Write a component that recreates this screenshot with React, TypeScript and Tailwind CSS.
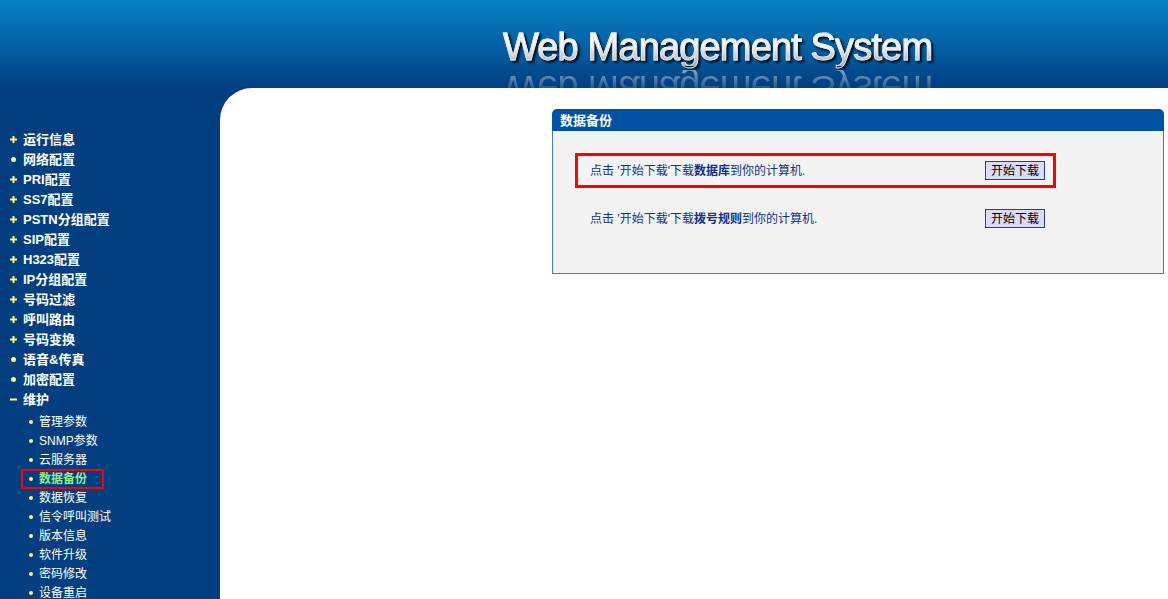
import React from "react";

type MenuItem = { label: string; icon: "plus" | "dot" | "minus" };

const mainMenu: MenuItem[] = [
  { label: "运行信息", icon: "plus" },
  { label: "网络配置", icon: "dot" },
  { label: "PRI配置", icon: "plus" },
  { label: "SS7配置", icon: "plus" },
  { label: "PSTN分组配置", icon: "plus" },
  { label: "SIP配置", icon: "plus" },
  { label: "H323配置", icon: "plus" },
  { label: "IP分组配置", icon: "plus" },
  { label: "号码过滤", icon: "plus" },
  { label: "呼叫路由", icon: "plus" },
  { label: "号码变换", icon: "plus" },
  { label: "语音&传真", icon: "dot" },
  { label: "加密配置", icon: "dot" },
  { label: "维护", icon: "minus" },
];

const subMenu = [
  "管理参数",
  "SNMP参数",
  "云服务器",
  "数据备份",
  "数据恢复",
  "信令呼叫测试",
  "版本信息",
  "软件升级",
  "密码修改",
  "设备重启",
];

const font = "font-['Liberation_Sans','Noto_Sans_CJK_SC',sans-serif]";

function MenuIcon({ kind }: { kind: MenuItem["icon"] }) {
  if (kind === "plus") {
    return (
      <svg width="7" height="7" viewBox="0 0 7 7" className="shrink-0">
        <rect x="0" y="2.5" width="7" height="2" fill="#fff67a" />
        <rect x="2.5" y="0" width="2" height="7" fill="#fff67a" />
      </svg>
    );
  }
  if (kind === "minus") {
    return (
      <svg width="7" height="7" viewBox="0 0 7 7" className="shrink-0">
        <rect x="0" y="2.5" width="7" height="2" fill="#fff67a" />
      </svg>
    );
  }
  return (
    <span className="w-[7px] h-[7px] flex items-center justify-center shrink-0">
      <span className="w-[5px] h-[5px] rounded-full bg-[#fff67a]" />
    </span>
  );
}

function Sidebar() {
  return (
    <aside className="w-[220px] shrink-0 pt-[41px]">
      {mainMenu.map((item) => (
        <div key={item.label} className="h-[20px] flex items-center pl-[10px] gap-[6px]">
          <MenuIcon kind={item.icon} />
          <span className="text-[13px] font-bold text-white leading-none">{item.label}</span>
        </div>
      ))}
      <div className="pt-[3px]">
        {subMenu.map((label) => {
          const active = label === "数据备份";
          return (
            <div key={label} className="h-[19px] flex items-center pl-[21px]">
              <div
                className={
                  active
                    ? "h-[20px] flex items-center gap-[6px] pl-[6px] pr-[15px] border-2 border-[#ff0000]"
                    : "h-[20px] flex items-center gap-[6px] pl-[6px] border-2 border-transparent"
                }
              >
                <span className="w-[4px] h-[4px] rounded-full bg-[#fff67a]" />
                <span
                  className={
                    active
                      ? "text-[12px] font-bold text-[#8ef08e] leading-none"
                      : "text-[12px] text-white leading-none"
                  }
                >
                  {label}
                </span>
              </div>
            </div>
          );
        })}
      </div>
    </aside>
  );
}

function DownloadRow({ target, highlight }: { target: string; highlight?: boolean }) {
  return (
    <div
      className={
        highlight
          ? "h-[35px] w-[481px] ml-[22px] flex items-center justify-between pl-[12px] pr-[8px] border-[3px] border-[#ff0000]"
          : "h-[35px] w-[481px] ml-[22px] flex items-center justify-between pl-[12px] pr-[8px] border-[3px] border-transparent"
      }
    >
      <span className="text-[12px] text-[#10308c] leading-none">
        点击 '开始下载'下载<b className="font-bold">{target}</b>到你的计算机.
      </span>
      <button className="w-[60px] h-[19px] bg-[#dcdcf8] border border-[#1f3fa6] text-[12px] text-black leading-none">
        开始下载
      </button>
    </div>
  );
}

function BackupPanel() {
  return (
    <div className="w-[612px] ml-[332px] mt-[21px]">
      <div className="h-[22px] bg-[#0052a4] rounded-t-[5px] flex items-center pl-[8px]">
        <span className="text-[13px] font-bold text-white leading-none">数据备份</span>
      </div>
      <div className="h-[143px] bg-[#f3f3f3] border border-t-0 border-[#4a76cc] pt-[22px] flex flex-col gap-[13px]">
        <DownloadRow target="数据库" highlight />
        <DownloadRow target="拨号规则" />
      </div>
    </div>
  );
}

export default function App() {
  const title = "Web Management System";
  return (
    <div className={`w-[1168px] h-[599px] overflow-hidden flex flex-col ${font}`}>
      <header className="h-[88px] shrink-0 overflow-hidden bg-gradient-to-b from-[#0782c2] via-[#0562a6] to-[#033e80] pl-[503px] pt-[28px]">
        <div className="flex flex-col items-start">
          <div className="text-[38px] leading-none tracking-[-0.85px] font-['Liberation_Sans',Arial,sans-serif] bg-gradient-to-b from-white via-[#f0f2f6] to-[#9aa6b8] bg-clip-text text-transparent [-webkit-text-stroke:0.9px_#e4e8ee] drop-shadow-[2px_2px_1px_rgba(0,0,0,0.85)]">
            {title}
          </div>
          <div className="mt-[4px] -scale-y-100 text-[38px] leading-none tracking-[-0.85px] font-['Liberation_Sans',Arial,sans-serif] bg-gradient-to-t from-[rgba(255,255,255,0.5)] via-[rgba(255,255,255,0.12)] to-transparent bg-clip-text text-transparent">
            {title}
          </div>
        </div>
      </header>
      <div className="flex-1 flex bg-[#033f80]">
        <Sidebar />
        <main className="flex-1 bg-white rounded-tl-[32px]">
          <BackupPanel />
        </main>
      </div>
    </div>
  );
}
